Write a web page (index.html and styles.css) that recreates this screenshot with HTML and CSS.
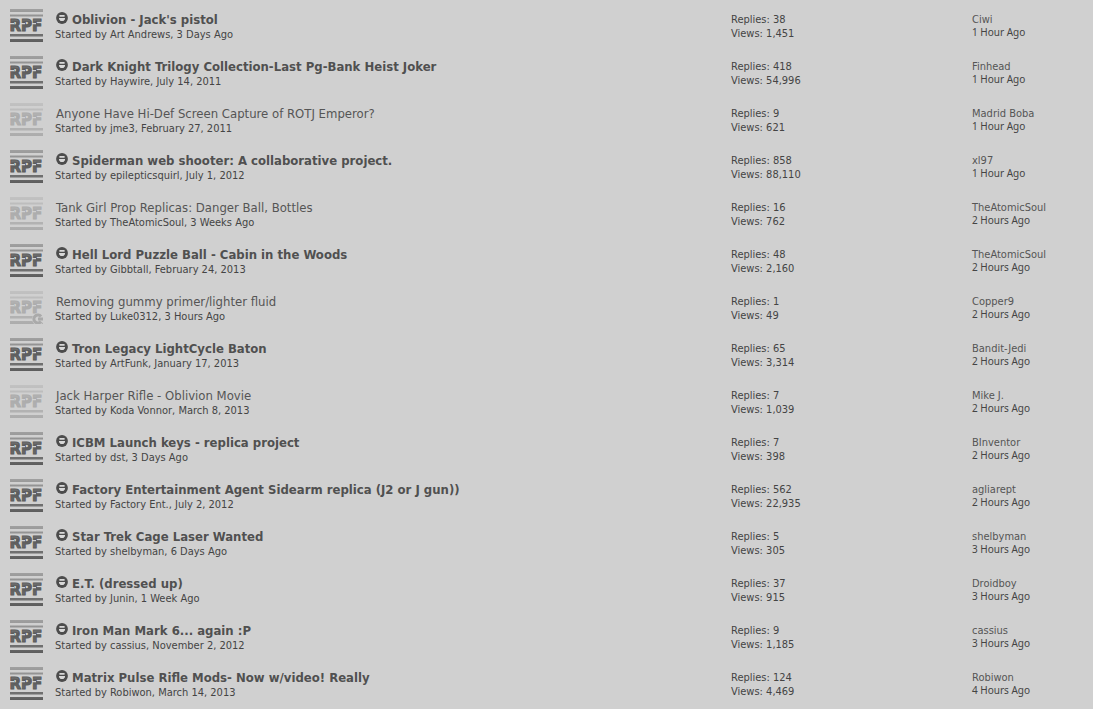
FILE: index.html
```
<!DOCTYPE html>
<html lang="en">
<head>
  <meta charset="UTF-8">
  <title>Threads</title>
  <link rel="stylesheet" href="styles.css">
</head>
<body>
  <!-- shared icons -->
  <svg class="defs" width="0" height="0" aria-hidden="true">
    <defs>
      <linearGradient id="fade" gradientUnits="userSpaceOnUse" x1="0" y1="0" x2="0" y2="33">
        <stop offset="0" stop-color="#a0a0a0"/>
        <stop offset="0.25" stop-color="#909090"/>
        <stop offset="0.4" stop-color="#5c5c5c"/>
        <stop offset="0.8" stop-color="#707070"/>
        <stop offset="1" stop-color="#5c5c5c"/>
      </linearGradient>
      <symbol id="rpf" viewBox="0 0 33 33">
        <g fill="url(#fade)">
          <rect width="33" height="3"/>
          <rect y="5.5" width="33" height="2"/>
          <text class="rpf-text" x="-0.5" y="22">RPF</text>
          <rect y="25" width="33" height="2.5"/>
          <rect y="30" width="33" height="3"/>
        </g>
        <!-- stencil cuts in the letters -->
        <path d="M0 14h4v1.2H0zM11 14h4v1.2h-4zM22 14h4v1.2h-4z" fill="#d0d0d0"/>
      </symbol>
      <symbol id="newpost" viewBox="0 0 12 12">
        <circle cx="6" cy="6" r="5.9" fill="#4c4c4c"/>
        <path d="M3.4 3h5.2v1.8H3.4zM3 6h6v1.2L7.4 9H4.6L3 7.2z" fill="#d8d8d8"/>
      </symbol>
    </defs>
  </svg>

  <ol class="threads">
    <li class="thread new">
      <svg class="status"><use href="#rpf"/></svg>
      <div class="info">
        <h3><a href="#" title="Go to first new post"><svg class="goto"><use href="#newpost"/></svg></a><a href="#">Oblivion - Jack's pistol</a></h3>
        <p>Started by <a href="#">Art Andrews</a>, 3 Days Ago</p>
      </div>
      <ul class="stats"><li>Replies: <a href="#">38</a></li><li>Views: 1,451</li></ul>
      <div class="lastpost"><a href="#">Ciwi</a><span class="time">1 Hour Ago</span></div>
    </li>
    <li class="thread new">
      <svg class="status"><use href="#rpf"/></svg>
      <div class="info">
        <h3><a href="#" title="Go to first new post"><svg class="goto"><use href="#newpost"/></svg></a><a href="#">Dark Knight Trilogy Collection-Last Pg-Bank Heist Joker</a></h3>
        <p>Started by <a href="#">Haywire</a>, July 14, 2011</p>
      </div>
      <ul class="stats"><li>Replies: <a href="#">418</a></li><li>Views: 54,996</li></ul>
      <div class="lastpost"><a href="#">Finhead</a><span class="time">1 Hour Ago</span></div>
    </li>
    <li class="thread old">
      <svg class="status"><use href="#rpf"/></svg>
      <div class="info">
        <h3><a href="#">Anyone Have Hi-Def Screen Capture of ROTJ Emperor?</a></h3>
        <p>Started by <a href="#">jme3</a>, February 27, 2011</p>
      </div>
      <ul class="stats"><li>Replies: <a href="#">9</a></li><li>Views: 621</li></ul>
      <div class="lastpost"><a href="#">Madrid Boba</a><span class="time">1 Hour Ago</span></div>
    </li>
    <li class="thread new">
      <svg class="status"><use href="#rpf"/></svg>
      <div class="info">
        <h3><a href="#" title="Go to first new post"><svg class="goto"><use href="#newpost"/></svg></a><a href="#">Spiderman web shooter: A collaborative project.</a></h3>
        <p>Started by <a href="#">epilepticsquirl</a>, July 1, 2012</p>
      </div>
      <ul class="stats"><li>Replies: <a href="#">858</a></li><li>Views: 88,110</li></ul>
      <div class="lastpost"><a href="#">xl97</a><span class="time">1 Hour Ago</span></div>
    </li>
    <li class="thread old">
      <svg class="status"><use href="#rpf"/></svg>
      <div class="info">
        <h3><a href="#">Tank Girl Prop Replicas: Danger Ball, Bottles</a></h3>
        <p>Started by <a href="#">TheAtomicSoul</a>, 3 Weeks Ago</p>
      </div>
      <ul class="stats"><li>Replies: <a href="#">16</a></li><li>Views: 762</li></ul>
      <div class="lastpost"><a href="#">TheAtomicSoul</a><span class="time">2 Hours Ago</span></div>
    </li>
    <li class="thread new">
      <svg class="status"><use href="#rpf"/></svg>
      <div class="info">
        <h3><a href="#" title="Go to first new post"><svg class="goto"><use href="#newpost"/></svg></a><a href="#">Hell Lord Puzzle Ball - Cabin in the Woods</a></h3>
        <p>Started by <a href="#">Gibbtall</a>, February 24, 2013</p>
      </div>
      <ul class="stats"><li>Replies: <a href="#">48</a></li><li>Views: 2,160</li></ul>
      <div class="lastpost"><a href="#">TheAtomicSoul</a><span class="time">2 Hours Ago</span></div>
    </li>
    <li class="thread old">
      <!-- thread with own posts -->
      <svg class="status" viewBox="0 0 33 33">
        <use href="#rpf"/>
        <circle cx="28" cy="28" r="6" fill="#d0d0d0"/>
        <path d="M31 25.5a4 4 0 1 0 0 5M33 28h-5" fill="none" stroke="#555" stroke-width="3"/>
      </svg>
      <div class="info">
        <h3><a href="#">Removing gummy primer/lighter fluid</a></h3>
        <p>Started by <a href="#">Luke0312</a>, 3 Hours Ago</p>
      </div>
      <ul class="stats"><li>Replies: <a href="#">1</a></li><li>Views: 49</li></ul>
      <div class="lastpost"><a href="#">Copper9</a><span class="time">2 Hours Ago</span></div>
    </li>
    <li class="thread new">
      <svg class="status"><use href="#rpf"/></svg>
      <div class="info">
        <h3><a href="#" title="Go to first new post"><svg class="goto"><use href="#newpost"/></svg></a><a href="#">Tron Legacy LightCycle Baton</a></h3>
        <p>Started by <a href="#">ArtFunk</a>, January 17, 2013</p>
      </div>
      <ul class="stats"><li>Replies: <a href="#">65</a></li><li>Views: 3,314</li></ul>
      <div class="lastpost"><a href="#">Bandit-Jedi</a><span class="time">2 Hours Ago</span></div>
    </li>
    <li class="thread old">
      <svg class="status"><use href="#rpf"/></svg>
      <div class="info">
        <h3><a href="#">Jack Harper Rifle - Oblivion Movie</a></h3>
        <p>Started by <a href="#">Koda Vonnor</a>, March 8, 2013</p>
      </div>
      <ul class="stats"><li>Replies: <a href="#">7</a></li><li>Views: 1,039</li></ul>
      <div class="lastpost"><a href="#">Mike J.</a><span class="time">2 Hours Ago</span></div>
    </li>
    <li class="thread new">
      <svg class="status"><use href="#rpf"/></svg>
      <div class="info">
        <h3><a href="#" title="Go to first new post"><svg class="goto"><use href="#newpost"/></svg></a><a href="#">ICBM Launch keys - replica project</a></h3>
        <p>Started by <a href="#">dst</a>, 3 Days Ago</p>
      </div>
      <ul class="stats"><li>Replies: <a href="#">7</a></li><li>Views: 398</li></ul>
      <div class="lastpost"><a href="#">BInventor</a><span class="time">2 Hours Ago</span></div>
    </li>
    <li class="thread new">
      <svg class="status"><use href="#rpf"/></svg>
      <div class="info">
        <h3><a href="#" title="Go to first new post"><svg class="goto"><use href="#newpost"/></svg></a><a href="#">Factory Entertainment Agent Sidearm replica (J2 or J gun))</a></h3>
        <p>Started by <a href="#">Factory Ent.</a>, July 2, 2012</p>
      </div>
      <ul class="stats"><li>Replies: <a href="#">562</a></li><li>Views: 22,935</li></ul>
      <div class="lastpost"><a href="#">agliarept</a><span class="time">2 Hours Ago</span></div>
    </li>
    <li class="thread new">
      <svg class="status"><use href="#rpf"/></svg>
      <div class="info">
        <h3><a href="#" title="Go to first new post"><svg class="goto"><use href="#newpost"/></svg></a><a href="#">Star Trek Cage Laser Wanted</a></h3>
        <p>Started by <a href="#">shelbyman</a>, 6 Days Ago</p>
      </div>
      <ul class="stats"><li>Replies: <a href="#">5</a></li><li>Views: 305</li></ul>
      <div class="lastpost"><a href="#">shelbyman</a><span class="time">3 Hours Ago</span></div>
    </li>
    <li class="thread new">
      <svg class="status"><use href="#rpf"/></svg>
      <div class="info">
        <h3><a href="#" title="Go to first new post"><svg class="goto"><use href="#newpost"/></svg></a><a href="#">E.T. (dressed up)</a></h3>
        <p>Started by <a href="#">Junin</a>, 1 Week Ago</p>
      </div>
      <ul class="stats"><li>Replies: <a href="#">37</a></li><li>Views: 915</li></ul>
      <div class="lastpost"><a href="#">Droidboy</a><span class="time">3 Hours Ago</span></div>
    </li>
    <li class="thread new">
      <svg class="status"><use href="#rpf"/></svg>
      <div class="info">
        <h3><a href="#" title="Go to first new post"><svg class="goto"><use href="#newpost"/></svg></a><a href="#">Iron Man Mark 6... again :P</a></h3>
        <p>Started by <a href="#">cassius</a>, November 2, 2012</p>
      </div>
      <ul class="stats"><li>Replies: <a href="#">9</a></li><li>Views: 1,185</li></ul>
      <div class="lastpost"><a href="#">cassius</a><span class="time">3 Hours Ago</span></div>
    </li>
    <li class="thread new">
      <svg class="status"><use href="#rpf"/></svg>
      <div class="info">
        <h3><a href="#" title="Go to first new post"><svg class="goto"><use href="#newpost"/></svg></a><a href="#">Matrix Pulse Rifle Mods- Now w/video! Really</a></h3>
        <p>Started by <a href="#">Robiwon</a>, March 14, 2013</p>
      </div>
      <ul class="stats"><li>Replies: <a href="#">124</a></li><li>Views: 4,469</li></ul>
      <div class="lastpost"><a href="#">Robiwon</a><span class="time">4 Hours Ago</span></div>
    </li>
  </ol>
</body>
</html>
```

FILE: styles.css
```
body { margin: 0; background: #d0d0d0; color: #444; font: 11px/14px Tahoma, "DejaVu Sans Condensed", "DejaVu Sans", sans-serif; }
a { color: inherit; text-decoration: none; }
a:hover { text-decoration: underline; }
ol, ul { list-style: none; margin: 0; padding: 0; }
h3, p { margin: 0; }
.defs { display: block; }

.thread { display: grid; grid-template-columns: 33px 1fr 241px 121px; padding: 9px 0 5px 10px; }
.status { width: 33px; height: 33px; }
.rpf-text { font: bold 15px "DejaVu Sans", sans-serif; stroke: #5c5c5c; stroke-width: 1px; }
.old .status { opacity: 0.3; }

.info { padding: 3px 12px 0; }
.info h3 { padding-left: 1px; font-size: 13px; line-height: 16px; font-weight: normal; color: #555; }
.new h3 { font-weight: bold; color: #505050; }
.info p { line-height: 13px; }
.goto { width: 12px; height: 12px; margin-right: 4px; }

.stats { padding-top: 4px; }
.lastpost { padding-top: 5px; line-height: 12px; }
.lastpost a { display: block; color: #555; }
.time { display: block; font-family: Verdana, "Noto Sans", sans-serif; font-size: 10px; }
```
